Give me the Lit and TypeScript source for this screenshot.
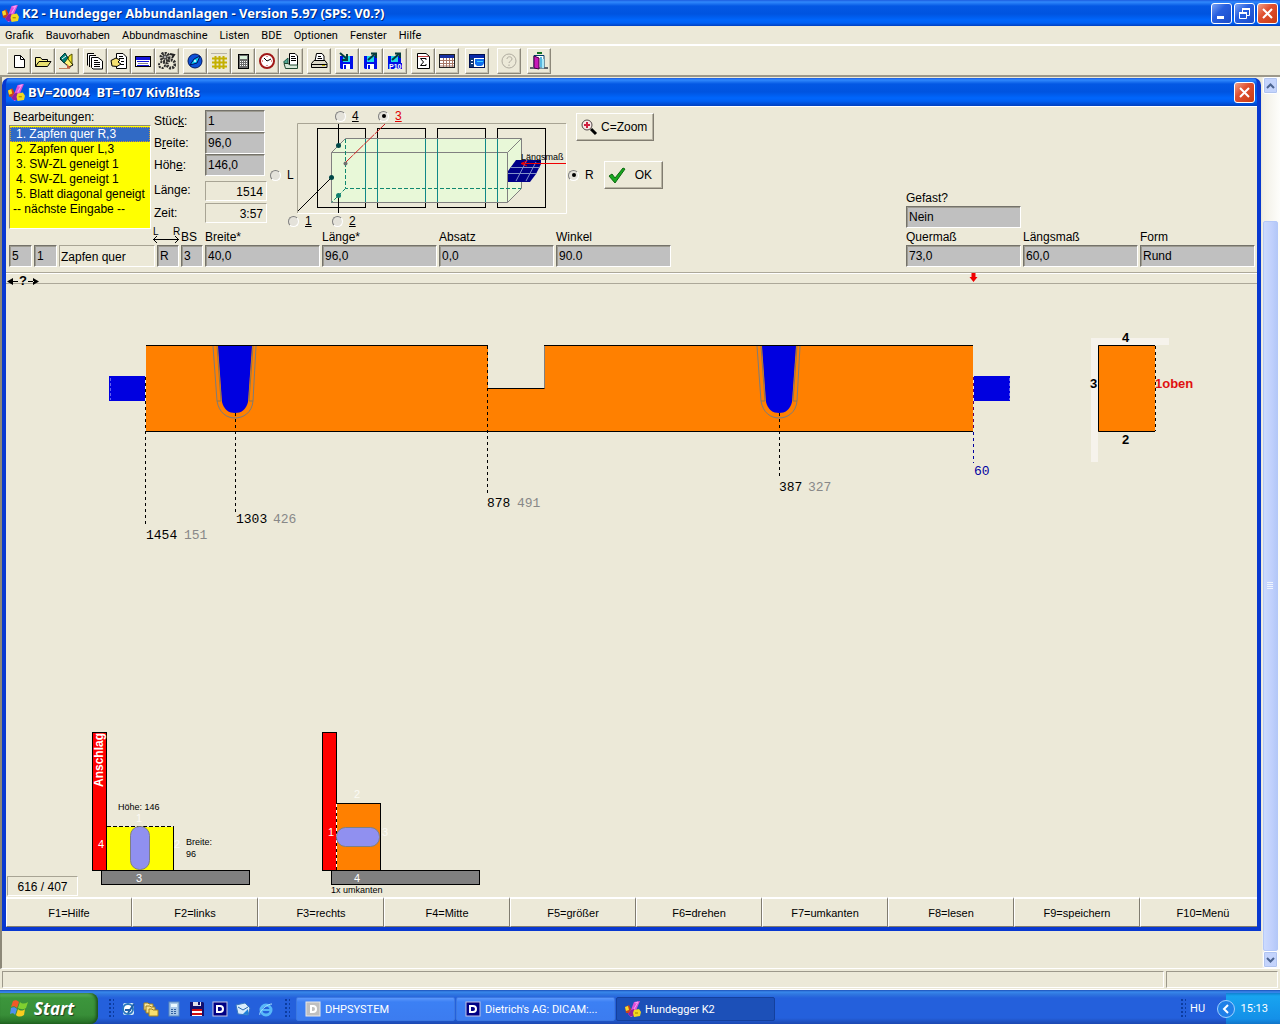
import { LitElement, html, svg, css, nothing } from "lit";
import { customElement, state } from "lit/decorators.js";

const logo = svg`
  <path d="M0 6 L4 4 L6 8 L5 12 L1 12 Z" fill="#c8431c"/>
  <path d="M0 6 L3 5 L4 9 L1 10 Z" fill="#f4dc2c"/>
  <path d="M9 1 L15 0 L12 7 L10 14 L6 16 L3 13 L6 9 Z" fill="#e050d8"/>
  <path d="M6 9 L9 8 L9 15 L5 15 L3 13 Z" fill="#90209c"/>
  <path d="M10 2 L13 1 L9 8" fill="none" stroke="#f8a0f4"/>
  <path d="M9 9 L14 8 L16 11 L15 15 L9 16 L8 12 Z" fill="#f0d820"/>
  <path d="M10 12 H13" stroke="#a08000"/>`;

const disk = svg`
  <path d="M2 4 H15 V17 H3 L2 16 Z" fill="#0010e8"/>
  <rect x="5" y="4" width="7" height="6" fill="#20d8e8"/>
  <rect x="5" y="12" width="7" height="5" fill="#fff"/>
  <rect x="6" y="13" width="2" height="4" fill="#0010e8"/>`;
const arrowOut = svg`<path d="M6 8 L13 2 M9 1.500 H14 V6" fill="none" stroke="#063c3c" stroke-width="2"/>`;

const icons: Record<string, unknown> = {
  new: svg`<path d="M4.500 3.500 H10.500 L14.500 7.500 V15.500 H4.500 Z" fill="#fff" stroke="#000"/><path d="M10.500 3.500 V7.500 H14.500" fill="none" stroke="#000"/>`,
  open: svg`<path d="M1.500 14.500 V5.500 H6.500 L8 7.500 H13.500 V9.500" fill="#f8f090" stroke="#000"/>
    <path d="M1.500 14.500 L5 9.500 H17 L13.500 14.500 Z" fill="#e8e070" stroke="#000"/>`,
  draw: svg`<path d="M2 7 L7 2 L15 13 L11 15 Z" fill="#fff27a" stroke="#000"/>
    <path d="M2 6 L7 1 L10 6 L6 11 Z" fill="#008078" stroke="#003c38"/>
    <path d="M4 7 L8 4" stroke="#fff"/><path d="M11 4 L14 2 V12 L10 7 Z" fill="#f0e428" stroke="#505000"/>
    <path d="M1 16.500 H12" stroke="#c08060"/><path d="M9 12 L13 16 H9 Z" fill="#c86040"/>`,
  pages: svg`<path d="M1.500 13.500 V1.500 H8 M3.500 15 V3.500 H10" fill="#fff" stroke="#000"/>
    <path d="M5.500 5.500 H12 L16.500 9 V17 H7 L5.500 15.500 Z" fill="#fff" stroke="#000"/>
    <path d="M8 8.500 H12 M8 10.500 H14 M8 12.500 H14 M8 14.500 H14" stroke="#000"/>`,
  props: svg`<path d="M6.500 1.500 H13 L16.500 5 V16.500 H6.500 Z" fill="#fff" stroke="#000"/>
    <path d="M9 4.500 H13 M9 6.500 H14 M11 9.500 H14 M11 12.500 H14" stroke="#000"/>
    <path d="M1 8.500 L6 6 L10 8 L8 10 L11 12 L7 14.500 L2 14 Z" fill="#f4e070" stroke="#000"/>`,
  card: svg`<rect x="1.500" y="4.500" width="15" height="10" fill="#fff" stroke="#000"/><rect x="2" y="5" width="14" height="3" fill="#1414d8"/><path d="M3 9.500 H15 M3 13.500 H15" stroke="#1414d8"/><path d="M4 11.500 H14" stroke="#888"/>`,
  gears: svg`<circle cx="7" cy="5" r="4" fill="none" stroke="#303030" stroke-width="3" stroke-dasharray="2 1"/><circle cx="7" cy="5" r="2" fill="#aaa" stroke="#222"/>
    <circle cx="4" cy="13" r="3" fill="none" stroke="#303030" stroke-width="2" stroke-dasharray="2 1"/><circle cx="13" cy="12" r="4" fill="none" stroke="#303030" stroke-width="3" stroke-dasharray="2 1"/>
    <path d="M12 2 L16 3 L14 6" fill="none" stroke="#222" stroke-width="2"/>`,
  compass: svg`<circle cx="9" cy="9" r="7" fill="#0c50d8" stroke="#001860"/><path d="M4 13 L8 7 L14 4 L11 11 Z" fill="#10c8f0" stroke="#001060"/><circle cx="9" cy="9" r="1" fill="#fff"/>`,
  grid: svg`<path d="M1 1.500 H17" stroke="#b8b4a8"/><path d="M2 6.500 H17 M2 10.500 H17 M2 14.500 H17 M5.500 4 V17 M9.500 4 V17 M13.500 4 V17" stroke="#c4b000" stroke-width="2"/>`,
  calc: svg`<rect x="4.500" y="2.500" width="10" height="14" fill="#6c6c6c" stroke="#000"/><rect x="6" y="4" width="7" height="3" fill="#d8f0d8"/><path d="M6 9.500 H13 M6 11.500 H13 M6 13.500 H13" stroke="#fff" stroke-dasharray="1 1"/>`,
  clock: svg`<circle cx="9" cy="9" r="7" fill="#fff" stroke="#a01818" stroke-width="2"/><path d="M9 9 L13 7 M9 9 L6 6" stroke="#000"/><path d="M9 4 V5 M9 13 V14 M4 9 H5 M13 9 H14" stroke="#c02020"/>`,
  report: svg`<path d="M7.500 1.500 H13 L15.500 4 V13.500 H7.500 Z" fill="#fff" stroke="#000"/><path d="M9 4.500 H13 M9 6.500 H14 M9 8.500 H14" stroke="#000"/>
    <path d="M1.500 10 L6 6 V14 Z" fill="#50a890" stroke="#205848"/><path d="M2 11.500 H6 L8 13 H15.500 V16.500 H3.500 Z" fill="#d8e8d8" stroke="#204830"/>`,
  print: svg`<path d="M5 9 L6.500 1.500 H12 L14 4 V9" fill="#fff" stroke="#000"/><path d="M8 4.500 H11 M7.500 6.500 H12" stroke="#000"/>
    <path d="M1.500 11.500 L4 8.500 H15 L17 11.500 V15.500 H1.500 Z" fill="#dcd8c8" stroke="#000"/><path d="M2 12.500 H17" stroke="#000"/><rect x="12" y="13" width="3" height="1" fill="#c0b000"/>`,
  load: svg`${disk}<path d="M2 1 L9 7 M9 2 V8 H4" fill="none" stroke="#063c3c" stroke-width="2"/>`,
  save: svg`${disk}${arrowOut}`,
  saveP10: svg`${disk}${arrowOut}<rect x="2" y="11" width="14" height="6" fill="#0010e8"/><text x="3" y="17" class="tiny">P10</text>`,
  sum: svg`<path d="M3.500 1.500 H12 L15.500 4.500 V16.500 H3.500 Z" fill="#fff" stroke="#000"/><path d="M4 4.500 H15" stroke="#c04040"/><path d="M12 8 V6.500 H6.500 L9.500 10 L6.500 13.500 H12 V12" fill="none" stroke="#000"/>`,
  table: svg`<rect x="1.500" y="2.500" width="15" height="13" fill="#fff" stroke="#202020"/><rect x="2" y="3" width="14" height="3" fill="#1830a0"/><path d="M2 8.500 H16 M2 11.500 H16 M2 14 H16 M5.500 6 V15 M8.500 6 V15 M11.500 6 V15 M14.500 6 V15" stroke="#a87868"/>`,
  panel: svg`<rect x="1.500" y="2.500" width="15" height="13" fill="#fff" stroke="#001050"/><rect x="2" y="3" width="14" height="3" fill="#0828a8"/><rect x="2" y="6" width="4" height="9" fill="#103878"/><path d="M7 7 H16 V11 C15 14 13 14 12 14 H9 L7 12 Z" fill="#1070f0"/><path d="M9 9.500 H15" stroke="#40d0ff"/><path d="M3 8.500 H5 M3 11.500 H5" stroke="#fff"/>`,
  help: svg`<circle cx="9" cy="9" r="7" fill="none" stroke="#b0aca0"/><path d="M7 7 C7 4 12 4 12 7 C12 9 9 9 9 11 M9 12.500 V14" fill="none" stroke="#b0aca0"/>`,
  exit: svg`<path d="M4 3.500 H14 V16 H4 Z" fill="#fff" stroke="#003c68"/><path d="M4 4 L9 6 V17 L4 16 Z" fill="#c818b8" stroke="#400040"/><path d="M11 5 V15" stroke="#58b8e0" stroke-width="2"/><path d="M13 7 V16" stroke="#a8e8f8" stroke-width="2"/>
    <rect x="7" y="0" width="5" height="2" fill="#107020"/><path d="M0 16 H4 M14 16 H18" stroke="#60646c" stroke-width="2"/>`,
};

const toolGroups: { gap: string; tools: [string, string][] }[] = [
  { gap: "", tools: [["new", "Neu"], ["open", "Öffnen"], ["draw", "Zeichnen"]] },
  { gap: "", tools: [["pages", "Bauteile"], ["props", "Eigenschaften"], ["card", "Karte"], ["gears", "Maschine"]] },
  { gap: "", tools: [["compass", "Ansicht"], ["grid", "Raster"], ["calc", "Rechner"], ["clock", "Zeit"], ["report", "Bericht"]] },
  { gap: "", tools: [["print", "Drucken"]] },
  { gap: "", tools: [["load", "Laden"], ["save", "Speichern"], ["saveP10", "Speichern P10"]] },
  { gap: "", tools: [["sum", "Summe"], ["table", "Tabelle"]] },
  { gap: "near", tools: [["panel", "Fenster"]] },
  { gap: "far", tools: [["help", "Hilfe"]] },
  { gap: "near", tools: [["exit", "Beenden"]] },
];

const menus = ["Grafik", "Bauvorhaben", "Abbundmaschine", "Listen", "BDE", "Optionen", "Fenster", "Hilfe"];
const operations = ["1. Zapfen quer R,3", "2. Zapfen quer L,3", "3. SW-ZL geneigt 1", "4. SW-ZL geneigt 1", "5. Blatt diagonal geneigt", "-- nächste Eingabe --"];
const functionKeys = ["F1=Hilfe", "F2=links", "F3=rechts", "F4=Mitte", "F5=größer", "F6=drehen", "F7=umkanten", "F8=lesen", "F9=speichern", "F10=Menü"];

const quickIcons: [string, unknown][] = [
  ["Internet", svg`<rect x="3" y="2" width="11" height="12" rx="2" fill="#d8ecf8"/><circle cx="8" cy="8" r="5" fill="#fff" stroke="#2878c0" stroke-width="2"/><path d="M5 9 H11 M8 12 L14 3" stroke="#2060a8" stroke-width="2"/>`],
  ["Ordner", svg`<path d="M1 2 H5 L6 3 H10 V9 H1 Z" fill="#f8e8a0" stroke="#a08020"/><path d="M3 5 H7 L8 6 H12 V12 H3 Z" fill="#f8e088" stroke="#a08020"/><path d="M6 8 H9 L10 9 H15 V15 H6 Z" fill="#f8e070" stroke="#a08020"/>`],
  ["Rechner", svg`<rect x="3" y="1" width="10" height="14" fill="#a8c8e8" stroke="#5888c0"/><rect x="5" y="3" width="6" height="3" fill="#e8f8ff"/><path d="M5 8.500 H11 M5 10.500 H11 M5 12.500 H11" stroke="#3060a0" stroke-dasharray="2 1"/>`],
  ["Diskette", svg`<path d="M1 1 H14 L15 2 V15 H1 Z" fill="#101070"/><rect x="4" y="1" width="8" height="4" fill="#e0e0e8"/><rect x="9" y="1" width="2" height="3" fill="#101070"/><rect x="3" y="8" width="10" height="7" fill="#fff"/><path d="M3 9 H13 M3 13 H13" stroke="#d01010" stroke-width="2"/>`],
  ["Dicam", svg`<rect x="1" y="1" width="14" height="14" fill="#000084" stroke="#c0c0e0"/><path d="M5 5 H8 C12 5 12 11 8 11 H5 Z" fill="none" stroke="#fff" stroke-width="2"/>`],
  ["Post", svg`<path d="M1 4 L10 2 L15 7 L13 14 L3 13 Z" fill="#d8ecfc" stroke="#3878c0"/><path d="M3 6 L8 9 L13 6" fill="none" stroke="#2868b0"/><path d="M8 13 L13 8 V14 Z" fill="#2080d8"/>`],
  ["Explorer", svg`<circle cx="8" cy="9" r="5" fill="none" stroke="#58b8f8" stroke-width="3"/><path d="M4 9 H12" stroke="#58b8f8" stroke-width="2"/><path d="M2 14 C0 12 8 3 14 3" fill="none" stroke="#a8e0ff"/>`],
];

const pocket = (x: number) => svg`
  <g transform="translate(${x} 345)">
    <path d="M-22 1 L-18 56 C-16 68 -8 73 0 73 C8 73 17 68 18 56 L21 1" fill="none" stroke="#7c7c7c"/>
    <path d="M-17 1 H17 L13 57 C11 65 6 68 0 68 C-6 68 -11 65 -13 57 Z" fill="#0000e0"/>
    <path d="M-18 1 L-14 56 H-18 M18 1 L14 56 H18" fill="none" stroke="#8c7850"/>
  </g>`;

@customElement("app-root")
export class AppRoot extends LitElement {
  @state() private side = "3";
  @state() private end = "R";

  static styles = css`
    :host { display: block; font: 12px/15px "Liberation Sans", Arial, sans-serif; color: #000; background: #ece9d8; }
    * { box-sizing: border-box; }
    button, input, select { font: inherit; color: inherit; margin: 0; border-radius: 0; }
    button { padding: 0; }
    svg { display: block; }
    .app { display: flex; flex-direction: column; min-height: 100vh; }
    .title { display: flex; align-items: center; gap: 3px; height: 26px; padding: 0 2px; color: #fff;
      background: linear-gradient(#1c5ce0, #3088fc 2px, #0458e4 6px, #0054e0 14px, #0066fc 20px, #0060f4 23px, #0040c0);
      font: bold 13px/18px "Noto Sans", "Open Sans", sans-serif; text-shadow: 1px 1px #002878; }
    .title .name { flex: 1; white-space: pre; }
    .box { width: 21px; height: 21px; display: grid; place-items: center; border: 1px solid #fff; border-radius: 3px;
      background: linear-gradient(135deg, #7ca4f4, #2860e0 40%, #1c4cc8); }
    .box.close { background: linear-gradient(135deg, #f0a088, #e05030 40%, #c83c14); }
    .boxes { display: flex; gap: 2px; }
    .menu { display: flex; height: 19px; align-items: center; border-bottom: 1px solid #fff; font: 11px/15px Roboto, "Noto Sans", sans-serif; }
    .menu button { border: 0; background: none; padding: 0 6px; }
    .menu button:first-child { padding-left: 5px; }
    .tools { display: flex; gap: 4px; padding: 2px 7px 3px; height: 32px; border-top: 1px solid #fff; border-bottom: 2px solid #9c988a; }
    .group { display: flex; }
    .group.near { margin-left: 2px; }
    .group.far { margin-left: 4px; }
    .group button { width: 24px; height: 26px; display: grid; place-items: center; background: #ece9d8;
      border: 1px solid; border-color: #fff #8c887a #8c887a #fff; box-shadow: -1px -1px #c8c4b4 inset; }
    .tiny { font: bold 7px "Liberation Sans", sans-serif; fill: #fff; }
    .mdi { flex: 1; display: flex; align-items: stretch; border-left: 2px solid #8c8878; border-bottom: 1px solid #fff; }
    .desk { flex: 1; min-width: 0; padding: 1px 1px 36px 0; }
    .child { border: solid #0838d0; border-width: 0 4px 4px; border-radius: 7px 7px 0 0; background: #0838d0; overflow: hidden; }
    .child .title { height: 28px; padding: 0 2px; }
    .inner { background: #ece9d8; }
    .scroll { width: 18px; display: flex; flex-direction: column; background: linear-gradient(90deg, #f0eee4, #fefefb); padding: 0 2px 0 1px; }
    .scroll button { height: 17px; border: 1px solid #fff; border-radius: 2px; background: #c4d4fc; display: grid; place-items: center; box-shadow: 0 0 0 1px #b0c4f0 inset; }
    .space { flex: 127 0 0; }
    .thumb { flex: 728 0 0; display: grid; place-items: center; border: 1px solid #b4c8f8; border-radius: 2px; background: linear-gradient(90deg, #ccdafe, #c0d0fc 60%, #b4c8f8); }
    .form { display: flex; justify-content: space-between; align-items: flex-end; height: 166px; padding: 3px 2px 5px 3px; border-top: 1px solid #fff; }
    .upper { display: flex; height: 120px; }
    .ops { width: 142px; display: flex; flex-direction: column; margin-right: 3px; }
    .ops label { padding-left: 4px; }
    .ops select { appearance: none; height: 104px; border: 1px solid; border-color: #8c887a #fff #fff #8c887a; background: #ffff00; padding: 1px 0 0; overflow: hidden; outline: 0; }
    .ops option { padding: 0 0 0 6px; min-height: 15px; line-height: 15px; }
    .ops option:last-child { padding-left: 3px; }
    .ops option:checked { color: #fff; background: linear-gradient(#316ac5, #316ac5); outline: 1px dotted #d0a030; outline-offset: -1px; }
    .params { display: grid; grid-template-columns: 51px 62px; grid-template-rows: 22px 22px 25px 23px 22px; align-items: center; }
    .params label { align-self: start; line-height: 22px; }
    .params input.in { width: 60px; height: 22px; align-self: start; }
    .in { width: 100%; height: 22px; border: 1px solid; border-color: #74726a #fff #fff #74726a; box-shadow: 1px 1px #9c9a90 inset; background: #c0c0c0; padding: 0 0 0 2px; outline: 0; }
    .flat { display: block; border: 1px solid; border-color: #a8a494 #fff #fff #a8a494; padding: 1px 3px; height: 20px; text-align: right; line-height: 18px; }
    .flat.op { width: 96px; height: 22px; text-align: left; padding: 2px 0 0 1px; }
    .view { position: relative; width: 298px; margin-left: 3px; }
    .view label { position: absolute; }
    label.pick { display: flex; gap: 6px; align-items: center; height: 14px; }
    .pick input { appearance: none; width: 11px; height: 11px; border: 1px solid; border-color: #808080 #fff #fff #808080; border-radius: 50%; background: #e4e2da; display: grid; place-items: center; }
    .pick input:checked::after { content: ""; width: 4px; height: 4px; border-radius: 50%; background: #000; }
    .red { color: #e00000; }
    .p4 { left: 65px; top: -1px; } .p3 { left: 108px; top: -1px; } .pl { left: 0; top: 58px; } .p1 { left: 18px; top: 104px; } .p2 { left: 62px; top: 104px; }
    .actions { display: flex; flex-direction: column; gap: 20px; padding-top: 3px; }
    .actions > button { margin-left: 8px; width: 78px; }
    .line { display: flex; align-items: center; gap: 10px; }
    .raised { height: 28px; display: flex; align-items: center; gap: 2px; background: #ece9d8; border: 1px solid; border-color: #fff #807c70 #807c70 #fff; box-shadow: -1px -1px #b8b4a4 inset; padding: 0 2px; }
    .raised.ok { width: 59px; gap: 8px; }
    .lower { display: flex; gap: 2px; align-items: flex-end; }
    .field { display: flex; flex-direction: column; width: 115px; }
    .field label { height: 15px; white-space: nowrap; }
    .field.small { width: 23px; }
    .field.mid { width: 22px; }
    .ends { overflow: visible; font-size: 10px; }
    .extra { display: grid; grid-template-columns: repeat(3, 115px); gap: 2px; }
    .extra .first { grid-column: 1 / -1; }
    .canvas { position: relative; }
    .canvas svg { width: 100%; height: auto; }
    .readout { position: absolute; left: 1px; bottom: 1px; width: 71px; height: 20px; text-align: center; padding: 1px; font-size: 12px; }
    .dim { font: 13px "Liberation Mono", "Courier New", monospace; }
    .bold { font: bold 13px "Liberation Sans", sans-serif; }
    .mark { font: 11px "Liberation Sans", sans-serif; }
    .small-t { font: 9px "Liberation Sans", sans-serif; }
    .stop { font: bold 12px "Liberation Sans", sans-serif; }
    .keys { display: flex; overflow: hidden; height: 30px; font-size: 11px; }
    .keys button { flex: 1 0 126px; border: 1px solid; border-color: #fff #807c70 #807c70 #fff; border-width: 2px 1px 1px; padding-top: 2px; background: #ece9d8; }
    .status { display: flex; gap: 2px; height: 21px; padding: 2px 2px 1px; border-bottom: 1px solid #fff; }
    .status div { border: 1px solid; border-color: #9c988a #fff #fff #9c988a; flex: 1; }
    .status div.last { flex: 0 0 112px; }
    .task { display: flex; height: 34px; padding-top: 3px; color: #fff; font: 11px/15px Roboto, "Noto Sans", sans-serif;
      background: linear-gradient(#1c50b8, #3888ec 2px, #3078e0 4px, #2460dc 8px, #2460dc 28px, #1c48b0); }
    .start { width: 98px; border: 0; border-radius: 0 8px 8px 0; display: flex; align-items: center; gap: 6px; padding-left: 10px; color: #fff;
      background: linear-gradient(#60b460, #3c963c 5px, #388e38 22px, #246c24); box-shadow: -2px 0 3px #1c501c inset; font: italic bold 17px/20px "Open Sans", "Noto Sans", sans-serif; text-shadow: 1px 1px 1px #204020; }
    .grip { width: 6px; margin: 5px 0 5px 10px; background: radial-gradient(circle, #0c3ca0 1px, transparent 1px) 0 0 / 4px 4px; }
    .quick { display: flex; align-items: center; gap: 7px; padding-left: 6px; }
    .quick button { width: 16px; height: 16px; border: 0; background: none; }
    .apps { display: flex; gap: 1px; padding: 4px 0 3px 6px; flex: 1; }
    .apps button { width: 159px; display: flex; align-items: center; gap: 4px; padding-left: 8px; border: 1px solid #3c78e0; border-radius: 2px; background: linear-gradient(#5c98fc, #3c80f4 4px, #3c7cf0); }
    .apps button.active { background: #1c50b8; border-color: #14409c; }
    .lang { width: 24px; display: grid; place-items: center; }
    .tray { display: flex; align-items: center; gap: 6px; padding-right: 12px; margin-left: 16px; background: linear-gradient(#1080d0, #18a4f0 3px, #1490e8 26px, #1074c8); }
    .arrow { width: 18px; height: 18px; margin-left: -9px; border: 1px solid #a0d0ff; border-radius: 50%; background: #2080e8; display: grid; place-items: center; }
  `;

  private pick(id: string, cls: string, group: "side" | "end") {
    return html`<label class="pick ${cls} ${id === "3" ? "red" : ""}">
      <input type="radio" name=${group} .checked=${this[group] === id} @change=${() => { this[group] = id; }}>
      ${group === "side" ? html`<u>${id}</u>` : html`<span>${id}</span>`}
    </label>`;
  }

  private field(id: string, label: unknown, value: string, size = "", spoken = "") {
    return html`<div class="field ${size}"><label for=${id}>${label}</label><input class="in" id=${id} .value=${value} aria-label=${spoken || nothing}></div>`;
  }

  private isometric() {
    return html`<svg width="298" height="120" viewBox="270 110 298 120">
      <path d="M297.500 213 V123.500 H566" fill="none" stroke="#a8a494"/><path d="M297.500 213.500 H566.500 V124" fill="none" stroke="#fff"/>
      ${[317, 377, 437, 497].map((x) => svg`<rect x=${x + 0.5} y="128.500" width="48" height="79" fill="none" stroke="#000"/>`)}
      <path d="M331.500 152.500 L345.500 138.500 H521.500 V188.500 L507.500 202.500 H331.500 Z" fill="#e8f8d8" stroke="#808080"/>
      <path d="M331.500 152.500 H507.500 V202.500 M507.500 152.500 L521.500 138.500" fill="none" stroke="#808080"/>
      ${[365, 377, 425, 437, 485, 497].map((x) => svg`<path d="M${x + 0.5} 139 V202" stroke="#108888"/>`)}
      <path d="M345.500 139 V188.500 H521 M345.500 188.500 L331.500 202.500" fill="none" stroke="#108870" stroke-dasharray="4 2"/>
      <path d="M508 181 V171 L516 160 H541 V164 L536 174 L530 182 H508 Z" fill="#000088"/>
      <path d="M508 173.500 H536 M511 167.500 H540 M516 181 L527 160 M526 181 L536 162" stroke="#8090c8" fill="none"/>
      <text x="521" y="160" class="small-t">Längsmaß</text>
      <path d="M566 163.500 H521 M527 161 L521 163.500 L527 166" stroke="#f00000" fill="none"/>
      <path d="M338.500 124 V145 M338.500 213 V197 M298 211 L331 178" stroke="#000"/>
      <path d="M385 124 L345 163" stroke="#d02020" stroke-dasharray="14 1"/>
      <circle cx="338.500" cy="145.500" r="2.500" fill="#004848"/><circle cx="331.500" cy="177.500" r="2.500" fill="#004848"/>
      <circle cx="345.500" cy="163.500" r="2" fill="#707070"/><circle cx="338.500" cy="195.500" r="2.500" fill="#108070"/>
    </svg>`;
  }

  private drawing() {
    return html`<svg viewBox="6 272 1251 625" role="img" aria-label="Bauteil">
      <path d="M6 272.500 H1257 M6 283.500 H1257" stroke="#aca899"/><path d="M6 273.500 H1257" stroke="#fff"/>
      <path d="M7 281.500 L13 278 V285 Z M39 281.500 L33 278 V285 Z M12 281 H18 V282 H12 Z M28 281 H34 V282 H28 Z"/>
      <text x="19" y="285" class="bold">?</text>
      <path d="M971.500 273 H975.500 V277 H977.500 L973.500 282 L969.500 277 H971.500 Z" fill="#f00000"/>

      <path d="M146 345 H488 V388 H544 V345 H973 V431 H146 Z" fill="#ff8000"/>
      <path d="M146 345.500 H488 M488 388.500 H544.500 M544 345.500 H973 M146 431.500 H973" stroke="#000"/>
      <path d="M544.500 346 V388" stroke="#808080"/>
      <rect x="109" y="376" width="36" height="25" fill="#0000e0"/><rect x="974" y="376" width="36" height="25" fill="#0000e0"/>
      <path d="M110.500 378 V400 M1009.500 378 V400" stroke="#6060f0" stroke-dasharray="3 2"/>
      ${pocket(235)}${pocket(779)}
      <g fill="none" stroke="#000" stroke-dasharray="3 3">
        <path d="M145.500 377 V526 M235.500 413 V512 M487.500 346 V493 M779.500 413 V477"/>
        <path d="M973.500 377 V431" stroke="#600060"/><path d="M973.500 432 V463" stroke="#0000a0"/>
      </g>
      <g class="dim">
        <text x="146" y="539">1454</text><text x="184" y="539" fill="#888">151</text>
        <text x="236" y="523">1303</text><text x="273" y="523" fill="#888">426</text>
        <text x="487" y="507">878</text><text x="517" y="507" fill="#888">491</text>
        <text x="779" y="491">387</text><text x="808" y="491" fill="#888">327</text>
        <text x="974" y="475" fill="#0000a0">60</text>
      </g>

      <path d="M1091 338 H1169 V345 H1098 V462 H1091 Z" fill="#f6f3ec"/>
      <rect x="1098" y="345" width="57" height="87" fill="#ff8000"/>
      <path d="M1155 345.500 H1098.500 V431.500 H1155" fill="none" stroke="#000"/><path d="M1155.500 346 V431" stroke="#000" stroke-dasharray="3 3"/>
      <g class="bold"><text x="1122" y="342">4</text><text x="1122" y="444">2</text><text x="1090" y="388">3</text><text x="1155" y="388" fill="#e01010">1oben</text></g>

      <rect x="92.500" y="732.500" width="14" height="138" fill="#ff0000" stroke="#000"/>
      <rect x="107" y="827" width="66" height="43" fill="#ffff00"/>
      <path d="M107 826.500 H173" stroke="#000" stroke-dasharray="4 2"/><path d="M173.500 826 V870" stroke="#000"/>
      <rect x="130.500" y="826.500" width="19" height="43" rx="9" fill="#9090f0" stroke="#808080"/>
      <rect x="101.500" y="870.500" width="148" height="14" fill="#808080" stroke="#000"/>
      <text transform="translate(103 787) rotate(-90)" class="stop" fill="#fff">Anschlag</text>
      <rect x="322.500" y="732.500" width="14" height="138" fill="#ff0000" stroke="#000"/>
      <rect x="336.500" y="803.500" width="44" height="67" fill="#ff8000" stroke="#000"/>
      <path d="M336.500 804 V870" stroke="#fff" stroke-dasharray="3 3"/>
      <rect x="336.500" y="827.500" width="43" height="19" rx="9" fill="#9090f0" stroke="#808080"/>
      <rect x="331.500" y="870.500" width="148" height="14" fill="#808080" stroke="#000"/>
      <g class="mark" fill="#fff"><text x="98" y="848">4</text><text x="136" y="882">3</text><text x="328" y="836">1</text><text x="354" y="882">4</text></g>
      <g class="mark" fill="#fbfaf4"><text x="136" y="822">1</text><text x="174" y="848">2</text><text x="354" y="798">2</text><text x="382" y="836">3</text></g>
      <g class="small-t"><text x="118" y="810">Höhe: 146</text><text x="186" y="845">Breite:</text><text x="186" y="857">96</text><text x="331" y="893">1x umkanten</text></g>
    </svg>`;
  }

  private brand(size = 17) {
    return html`<svg width=${size} height=${size} viewBox="0 0 16 16">${logo}</svg>`;
  }

  private cross() {
    return html`<svg width="13" height="13"><path d="M2 2 L11 11 M11 2 L2 11" stroke="#fff" stroke-width="2"/></svg>`;
  }

  render() {
    return html`<div class="app">
      <header class="title">${this.brand()}<span class="name">K2 - Hundegger Abbundanlagen - Version 5.97 (SPS: V0.?)</span>
        <span class="boxes">
          <button class="box" aria-label="Minimieren"><svg width="13" height="13"><path d="M2 10.500 H9" stroke="#fff" stroke-width="3"/></svg></button>
          <button class="box" aria-label="Wiederherstellen"><svg width="13" height="13"><path d="M1.500 5.500 H8.500 V11.500 H1.500 Z M4.500 5 V1.500 H11.500 V8.500 H9" fill="none" stroke="#fff"/><path d="M1 6 H9 M4 2 H12" stroke="#fff" stroke-width="2"/></svg></button>
          <button class="box close" aria-label="Schließen">${this.cross()}</button>
        </span>
      </header>
      <nav class="menu">${menus.map((m) => html`<button>${m}</button>`)}</nav>
      <div class="tools">${toolGroups.map((g) => html`<div class="group ${g.gap}">${g.tools.map(([id, name]) => html`<button aria-label=${name}><svg width="18" height="18" viewBox="0 0 18 18">${icons[id]}</svg></button>`)}</div>`)}</div>
      <main class="mdi">
        <div class="desk"><section class="child">
          <header class="title">${this.brand()}<span class="name">BV=20004  BT=107 Kivßltßs</span><button class="box close" aria-label="Schließen">${this.cross()}</button></header>
          <div class="inner">
            <div class="form">
              <div>
                <div class="upper">
                  <div class="ops"><label for="ops">Bearbeitungen:</label>
                    <select id="ops" size="6">${operations.map((o, i) => html`<option ?selected=${i === 0}>${o}</option>`)}</select></div>
                  <div class="params">
                    <label for="count">Stüc<u>k</u>:</label><input class="in" id="count" value="1">
                    <label for="width">B<u>r</u>eite:</label><input class="in" id="width" value="96,0">
                    <label for="height">Höh<u>e</u>:</label><input class="in" id="height" value="146,0">
                    <span>Länge:</span><output class="flat">1514</output>
                    <span>Zeit:</span><output class="flat">3:57</output>
                  </div>
                  <div class="view">${this.isometric()}
                    ${this.pick("4", "p4", "side")}${this.pick("3", "p3", "side")}${this.pick("L", "pl", "end")}${this.pick("1", "p1", "side")}${this.pick("2", "p2", "side")}
                  </div>
                  <div class="actions">
                    <button class="raised"><svg width="20" height="20"><circle cx="8" cy="8" r="5" fill="#f8e8e8" stroke="#504848"/><path d="M5 8 H11 M8 5 V11" stroke="#d02040" stroke-width="2"/><path d="M12 12 L17 17" stroke="#000" stroke-width="3"/></svg>C=Zoom</button>
                    <div class="line">${this.pick("R", "", "end")}<button class="raised ok"><svg width="20" height="20"><path d="M2 11 L5 9 L8 13 L16 3 L18 4 L8 18 Z" fill="#18a820" stroke="#0c6810"/></svg>OK</button></div>
                  </div>
                </div>
                <div class="lower">
                  ${this.field("nr", "", "5", "small", "Nummer")}${this.field("anzahl", "", "1", "small", "Anzahl")}
                  <output class="flat op">Zapfen quer</output>
                  ${this.field("ende", html`<svg class="ends" width="22" height="15" viewBox="157 230 22 15"><text x="153" y="235">L</text><text x="173" y="235">R</text><path d="M153 239.500 H179 M157 236 L153.500 239.500 L157 243 M175 236 L178.500 239.500 L175 243" fill="none" stroke="#000"/></svg>`, "R", "mid")}
                  ${this.field("bs", "BS", "3", "mid")}
                  ${this.field("breite", "Breite*", "40,0")}${this.field("laenge", "Länge*", "96,0")}${this.field("absatz", "Absatz", "0,0")}${this.field("winkel", "Winkel", "90.0")}
                </div>
              </div>
              <div class="extra">
                <div class="first">${this.field("gefast", "Gefast?", "Nein")}</div>
                ${this.field("quermass", "Quermaß", "73,0")}${this.field("laengsmass", "Längsmaß", "60,0")}${this.field("form", "Form", "Rund")}
              </div>
            </div>
            <div class="canvas">${this.drawing()}<output class="flat readout">616 / 407</output></div>
            <div class="keys">${functionKeys.map((k) => html`<button>${k}</button>`)}</div>
          </div>
        </section></div>
        <div class="scroll">
          <button aria-label="Nach oben"><svg width="9" height="6"><path d="M1 5 L4.500 1.500 L8 5" fill="none" stroke="#4c6490" stroke-width="2"/></svg></button>
          <div class="space"></div>
          <div class="thumb"><svg width="7" height="8"><path d="M0 .5 H6 M0 2.500 H6 M0 4.500 H6 M0 6.500 H6" stroke="#eef4fe"/></svg></div>
          <button aria-label="Nach unten"><svg width="9" height="6"><path d="M1 1 L4.500 4.500 L8 1" fill="none" stroke="#4c6490" stroke-width="2"/></svg></button>
        </div>
      </main>
      <div class="status"><div></div><div class="last"></div></div>
      <footer class="task">
        <button class="start"><svg width="18" height="17" viewBox="0 0 18 17"><path d="M3 1 C5 0 7 0 9 2 L7 8 C5 6 3 6 1 7 Z" fill="#f05828"/><path d="M10 2 C12 4 15 4 18 2 L16 8 C13 10 10 9 8 8 Z" fill="#80d030"/><path d="M1 8 C3 7 5 7 7 9 L5 15 C4 13 2 13 0 14 Z" fill="#5090f0"/><path d="M8 9 C10 11 13 11 15 9 L14 15 C11 17 8 17 6 15 Z" fill="#f8cc20"/></svg>Start</button>
        <span class="grip"></span>
        <div class="quick">${quickIcons.map(([name, icon]) => html`<button aria-label=${name}><svg width="16" height="16">${icon}</svg></button>`)}</div>
        <span class="grip"></span>
        <div class="apps">
          <button><svg width="16" height="16"><rect x="1" y="1" width="14" height="14" fill="#c0c0c0" stroke="#e8e8e8"/><path d="M6 5 H8 C12 5 12 11 8 11 H6 Z" fill="none" stroke="#fff" stroke-width="2"/></svg>DHPSYSTEM</button>
          <button><svg width="16" height="16">${quickIcons[4][1]}</svg>Dietrich's AG: DICAM:...</button>
          <button class="active">${this.brand(16)}Hundegger K2</button>
        </div>
        <span class="grip"></span><span class="lang">HU</span>
        <div class="tray"><button class="arrow" aria-label="Einblenden"><svg width="8" height="10"><path d="M6 1 L2 5 L6 9" fill="none" stroke="#fff" stroke-width="2"/></svg></button><span>15:13</span></div>
      </footer>
    </div>`;
  }
}
